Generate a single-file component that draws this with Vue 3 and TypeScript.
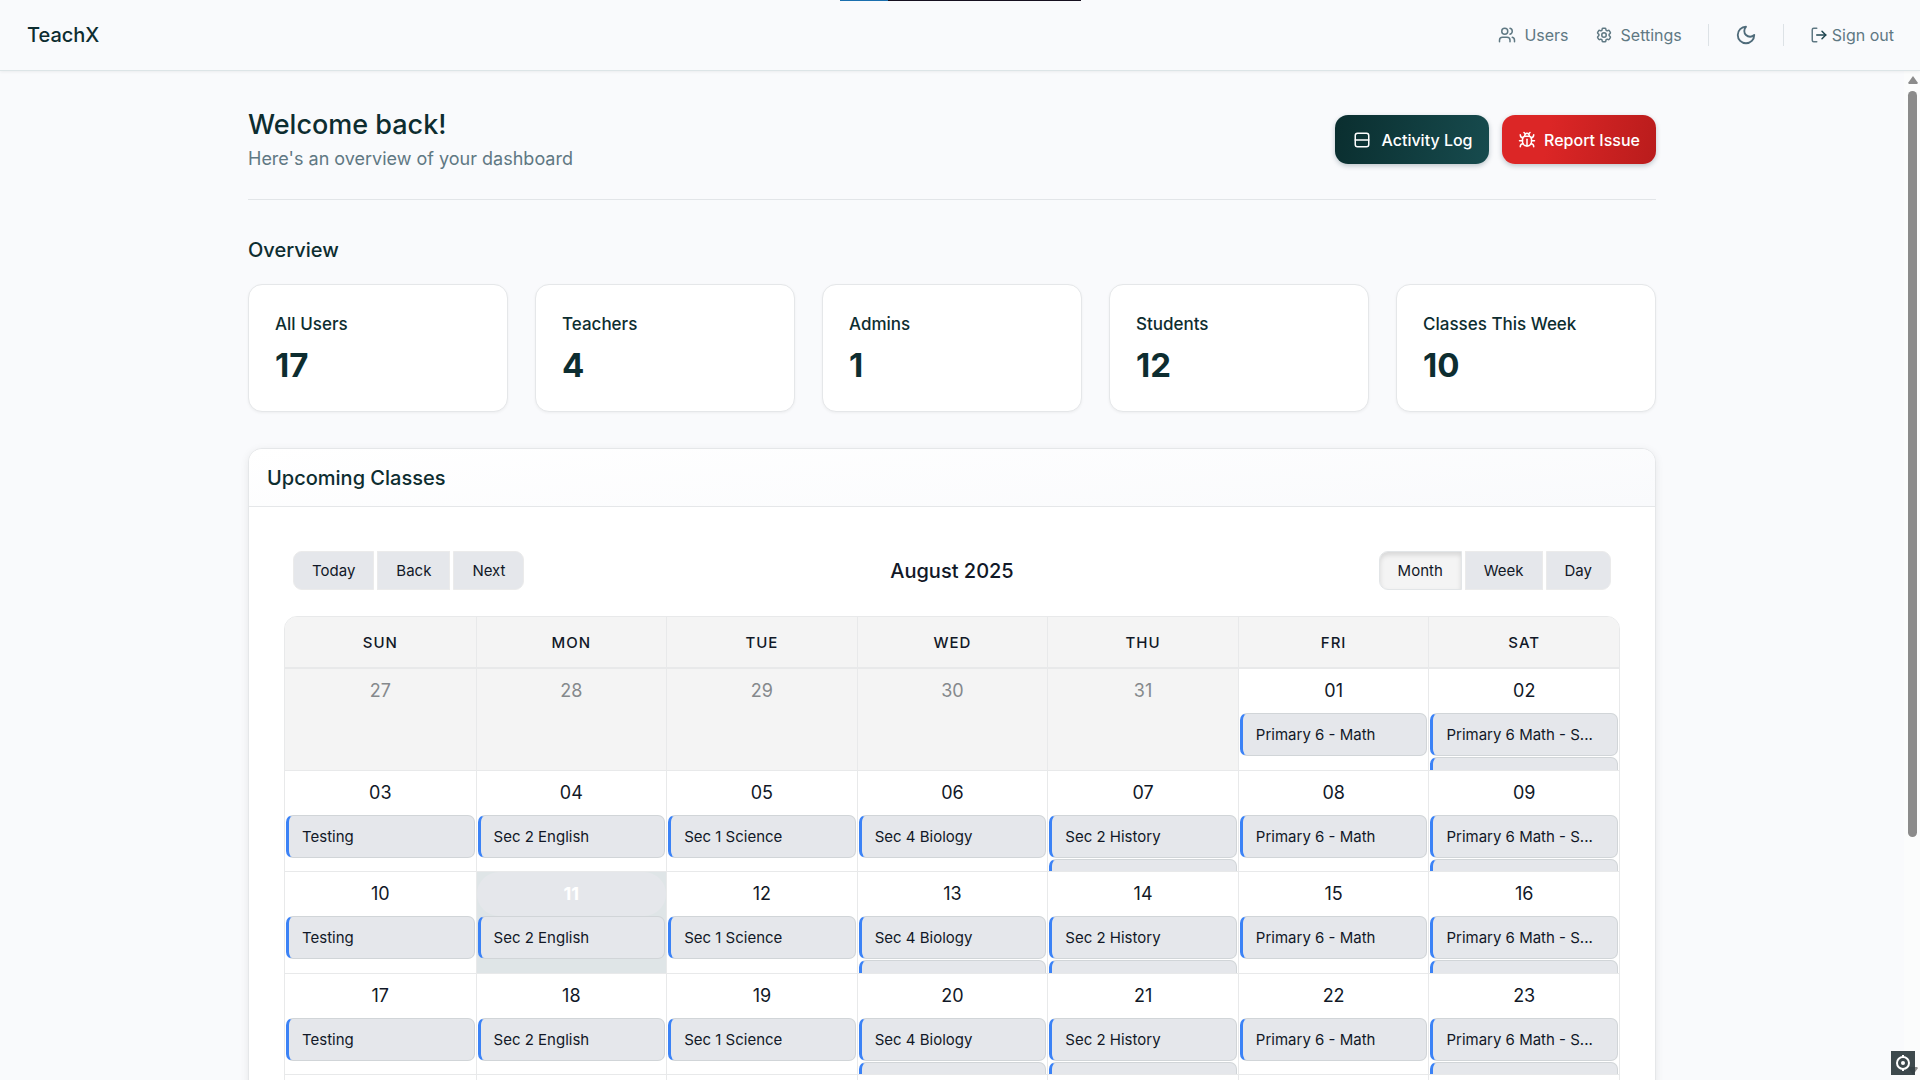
<script setup lang="ts">
interface Stat {
  label: string
  value: number
}

interface Day {
  label: string
  outside: boolean
  today: boolean
  title: string
  more: boolean
}

const stats: Stat[] = [
  { label: 'All Users', value: 17 },
  { label: 'Teachers', value: 4 },
  { label: 'Admins', value: 1 },
  { label: 'Students', value: 12 },
  { label: 'Classes This Week', value: 10 },
]

const weekdays: string[] = ['Sun', 'Mon', 'Tue', 'Wed', 'Thu', 'Fri', 'Sat']

const classes: string[] = [
  'Testing',
  'Sec 2 English',
  'Sec 1 Science',
  'Sec 4 Biology',
  'Sec 2 History',
  'Primary 6 - Math',
  'Primary 6 Math - S...',
]

const daysWithMore: number[] = [2, 7, 9, 13, 14, 16, 20, 21, 23, 27, 28, 30]
const today = 11

// August 2025 begins on a Friday, so the grid opens with five days of July.
const weeks: Day[][] = Array.from({ length: 6 }, (_, w) =>
  weekdays.map((_name, d) => {
    const n = w * 7 + d - 4
    const outside = n < 1 || n > 31
    const shown = n < 1 ? n + 31 : n > 31 ? n - 31 : n
    return {
      label: String(shown).padStart(2, '0'),
      outside,
      today: n === today,
      title: outside ? '' : classes[d],
      more: daysWithMore.includes(n),
    }
  }),
)
</script>

<template>
  <div class="app">
    <div class="loader"><span class="loader-done"></span></div>

    <header class="topbar">
      <a class="brand" href="#">TeachX</a>
      <nav class="nav">
        <a class="nav-link" href="#">
          <svg class="icon" viewBox="0 0 24 24"><path d="M16 21v-2a4 4 0 0 0-4-4H6a4 4 0 0 0-4 4v2" /><circle cx="9" cy="7" r="4" /><path d="M22 21v-2a4 4 0 0 0-3-3.87" /><path d="M16 3.13a4 4 0 0 1 0 7.75" /></svg>
          Users
        </a>
        <a class="nav-link" href="#">
          <svg class="icon" viewBox="0 0 24 24"><path d="M9.594 3.94c.09-.542.56-.94 1.11-.94h2.593c.55 0 1.02.398 1.11.94l.213 1.281c.063.374.313.686.645.87.074.04.147.083.22.127.325.196.72.257 1.075.124l1.217-.456a1.125 1.125 0 0 1 1.37.49l1.296 2.247a1.125 1.125 0 0 1-.26 1.431l-1.003.827c-.293.241-.438.613-.43.992a7.723 7.723 0 0 1 0 .255c-.008.378.137.75.43.991l1.004.827c.424.35.534.955.26 1.43l-1.298 2.247a1.125 1.125 0 0 1-1.369.491l-1.217-.456c-.355-.133-.75-.072-1.076.124a6.47 6.47 0 0 1-.22.128c-.331.183-.581.495-.644.869l-.213 1.281c-.09.543-.56.94-1.11.94h-2.594c-.55 0-1.019-.398-1.11-.94l-.213-1.281c-.062-.374-.312-.686-.644-.87a6.52 6.52 0 0 1-.22-.127c-.325-.196-.72-.257-1.076-.124l-1.217.456a1.125 1.125 0 0 1-1.369-.49l-1.297-2.247a1.125 1.125 0 0 1 .26-1.431l1.004-.827c.292-.24.437-.613.43-.991a6.932 6.932 0 0 1 0-.255c.007-.38-.138-.751-.43-.992l-1.004-.827a1.125 1.125 0 0 1-.26-1.43l1.297-2.247a1.125 1.125 0 0 1 1.37-.491l1.216.456c.356.133.751.072 1.076-.124.072-.044.146-.086.22-.128.332-.183.582-.495.644-.869l.214-1.28Z" /><circle cx="12" cy="12" r="3" /></svg>
          Settings
        </a>
        <span class="divider"></span>
        <button class="theme" type="button" aria-label="Dark mode">
          <svg class="icon moon" viewBox="0 0 24 24"><path d="M12 3a6 6 0 0 0 9 9 9 9 0 1 1-9-9Z" /></svg>
        </button>
        <span class="divider"></span>
        <button class="nav-link signout" type="button">
          <svg class="icon" viewBox="0 0 24 24"><path d="M9 21H5a2 2 0 0 1-2-2V5a2 2 0 0 1 2-2h4" /><path class="dark" d="m16 17 5-5-5-5" /><path class="dark" d="M21 12H9" /></svg>
          Sign out
        </button>
      </nav>
    </header>

    <div class="body">
      <main class="scroller">
        <div class="container">
          <div class="intro">
            <div>
              <h1>Welcome back!</h1>
              <p>Here's an overview of your dashboard</p>
            </div>
            <div class="actions">
              <button class="action log" type="button">
                <svg class="icon rows" viewBox="0 0 24 24"><rect x="3" y="3" width="18" height="18" rx="3" /><path d="M3 12h18" /></svg>
                Activity Log
              </button>
              <button class="action report" type="button">
                <svg class="icon" viewBox="0 0 24 24"><path d="m8 2 1.88 1.88" /><path d="M14.12 3.88 16 2" /><path d="M9 7.13v-1a3.003 3.003 0 1 1 6 0v1" /><path d="M12 20c-3.3 0-6-2.7-6-6v-3a4 4 0 0 1 4-4h4a4 4 0 0 1 4 4v3c0 3.3-2.7 6-6 6" /><path d="M12 20v-9" /><path d="M6.53 9C4.6 8.8 3 7.1 3 5" /><path d="M6 13H2" /><path d="M3 21c0-2.1 1.7-3.9 3.8-4" /><path d="M20.97 5c0 2.1-1.6 3.8-3.5 4" /><path d="M22 13h-4" /><path d="M17.2 17c2.1.1 3.8 1.9 3.8 4" /></svg>
                Report Issue
              </button>
            </div>
          </div>

          <section class="overview">
            <h2>Overview</h2>
            <div class="stats">
              <article v-for="s in stats" :key="s.label" class="stat">
                <h3>{{ s.label }}</h3>
                <p>{{ s.value }}</p>
              </article>
            </div>
          </section>

          <section class="panel">
            <div class="panel-head"><h2>Upcoming Classes</h2></div>
            <div class="panel-body">
              <div class="toolbar">
                <div class="group">
                  <button type="button">Today</button>
                  <button type="button">Back</button>
                  <button type="button">Next</button>
                </div>
                <div class="month">August 2025</div>
                <div class="group views">
                  <button type="button" class="active">Month</button>
                  <button type="button">Week</button>
                  <button type="button">Day</button>
                </div>
              </div>

              <table class="calendar">
                <thead>
                  <tr>
                    <th v-for="d in weekdays" :key="d" scope="col">{{ d }}</th>
                  </tr>
                </thead>
                <tbody>
                  <tr v-for="(week, w) in weeks" :key="w">
                    <td v-for="day in week" :key="day.label" :class="{ outside: day.outside, today: day.today }">
                      <div class="date">{{ day.label }}</div>
                      <div v-if="day.title" class="event">{{ day.title }}</div>
                      <div v-if="day.more" class="event"></div>
                    </td>
                  </tr>
                </tbody>
              </table>
            </div>
          </section>
        </div>
      </main>

      <div class="scrollbar" aria-hidden="true">
        <svg class="arrow" viewBox="0 0 10 8"><path d="M5 0 10 7 9 8H1L0 7Z" /></svg>
        <div class="thumb"></div>
        <svg class="arrow down" viewBox="0 0 10 8"><path d="M5 8 0 1 1 0h8l1 1Z" /></svg>
      </div>
    </div>

    <div class="badge">
      <svg viewBox="0 0 24 24"><circle cx="12" cy="12" r="6" /><circle class="dot" cx="12" cy="12" r="2" /><path d="M12 4v2M12 18v2" /></svg>
    </div>
  </div>
</template>

<style>
body {
  background: #f9fafc;
}
</style>

<style scoped>
* {
  box-sizing: border-box;
}

.app {
  position: relative;
  display: flex;
  flex-direction: column;
  height: 100vh;
  overflow: hidden;
  background: #f9fafc;
  color: #0d2d30;
  font-family: Inter, "Liberation Sans", sans-serif;
  font-size: 18px;
}

h1,
h2,
h3,
p {
  margin: 0;
}

button {
  font-family: inherit;
  cursor: pointer;
}

.icon {
  flex: none;
  width: 18px;
  height: 18px;
  fill: none;
  stroke: currentColor;
  stroke-width: 2;
  stroke-linecap: round;
  stroke-linejoin: round;
}

.loader {
  position: absolute;
  top: 0;
  left: 50%;
  width: 241px;
  height: 1px;
  margin-left: -120px;
  background: #16101f;
}

.loader-done {
  display: block;
  width: 20%;
  height: 1px;
  background: #1a6fae;
}

.topbar {
  position: relative;
  display: flex;
  flex: none;
  align-items: center;
  justify-content: space-between;
  height: 71px;
  padding: 0 26px 0 27px;
  border-bottom: 1px solid #dde5e7;
  box-shadow: 0 1px 3px rgba(0, 0, 0, 0.06);
}

.brand {
  color: #0d2d30;
  font-size: 20px;
  font-weight: 500;
  text-decoration: none;
}

.nav {
  display: flex;
  align-items: center;
  gap: 26px;
}

.nav-link {
  display: flex;
  align-items: center;
  gap: 8px;
  color: #5f7883;
  font-size: 16px;
  line-height: 22px;
  text-decoration: none;
}

.divider {
  width: 1px;
  height: 22px;
  background: #dde2e6;
}

.theme,
.signout {
  padding: 0;
  border: 0;
  background: none;
}

.signout {
  gap: 4px;
}

.theme {
  display: flex;
  color: #4f6b7a;
}

.moon {
  width: 22px;
  height: 22px;
}

.dark {
  stroke: #1f4650;
}

.body {
  display: flex;
  flex: 1;
  min-height: 0;
}

.scroller {
  flex: 1;
  min-width: 0;
  overflow-y: auto;
  scrollbar-width: none;
}

.container {
  max-width: 1408px;
  margin: 0 auto;
  padding: 36px 0;
}

.intro {
  display: flex;
  align-items: center;
  justify-content: space-between;
  padding-bottom: 27px;
  border-bottom: 1px solid #e2e5e8;
}

h1 {
  font-size: 27px;
  font-weight: 500;
  line-height: 36px;
}

.intro p {
  margin-top: 2px;
  color: #5f7883;
  line-height: 27px;
}

.actions {
  display: flex;
  gap: 13px;
}

.action {
  display: flex;
  align-items: center;
  justify-content: center;
  gap: 8px;
  min-width: 154px;
  height: 49px;
  padding: 0 16px;
  border: 0;
  border-radius: 13px;
  box-shadow: 0 2px 5px rgba(15, 45, 60, 0.25);
  color: #fff;
  font-size: 16px;
  font-weight: 500;
  white-space: nowrap;
}

.rows {
  margin: 0 2px;
}

.log {
  background: linear-gradient(100deg, #0a2e2f, #174b4e);
}

.report {
  background: linear-gradient(100deg, #dc2626 30%, #b91c1c);
}

.overview {
  padding-top: 36px;
}

h2 {
  font-size: 20px;
  font-weight: 500;
  line-height: 28px;
}

.stats {
  display: grid;
  grid-template-columns: repeat(5, 1fr);
  gap: 27px;
  margin-top: 20px;
}

.stat {
  padding: 26px;
  border: 1px solid #e5e7e9;
  border-radius: 14px;
  background: #fff;
  box-shadow: 0 1px 3px rgba(0, 0, 0, 0.05);
}

.stat h3 {
  font-size: 17px;
  font-weight: 500;
  line-height: 27px;
}

.stat p {
  margin-top: 7px;
  font-size: 33px;
  font-weight: 700;
  line-height: 40px;
}

.panel {
  margin-top: 36px;
  overflow: hidden;
  border: 1px solid #e5e7e9;
  border-radius: 14px;
  background: #fff;
  box-shadow: 0 2px 8px rgba(0, 0, 0, 0.08);
}

.panel-head {
  padding: 15px 18px 14px;
  border-bottom: 1px solid #e5e7e9;
  background: linear-gradient(175deg, #fff, #f9fafc);
}

.panel-body {
  padding: 35px;
}

.toolbar {
  display: grid;
  grid-template-columns: 1fr auto 1fr;
  align-items: center;
  margin-bottom: 26px;
  padding: 9px 9px 0;
}

.group {
  display: flex;
  gap: 3px;
}

.views {
  justify-content: flex-end;
}

.group button {
  height: 39px;
  padding: 0 18px;
  border: 1px solid #ebebeb;
  background: #e5e7eb;
  color: #111827;
  font-size: 15px;
}

.group button:first-child {
  border-radius: 9px 0 0 9px;
}

.group button:last-child {
  border-radius: 0 9px 9px 0;
}

.group .active {
  background: #f4f4f4;
  border-color: #e2e5e7;
  box-shadow: inset 0 3px 5px rgba(0, 0, 0, 0.12);
}

.month {
  color: #111827;
  font-size: 20px;
  font-weight: 500;
}

.calendar {
  display: block;
  overflow: hidden;
  border: 1px solid #e8e9ea;
  border-radius: 13px;
  color: #111827;
}

thead {
  display: block;
  border-bottom: 2px solid #e8e9ea;
  background: #f4f4f4;
}

tbody {
  display: grid;
  grid-template-rows: repeat(6, minmax(0, 1fr));
  height: 609px;
}

tr {
  display: grid;
  grid-template-columns: repeat(7, minmax(0, 1fr));
}

tbody tr {
  border-bottom: 1px solid #e8e9ea;
}

th {
  height: 50px;
  padding: 1px 0 0;
  font-size: 15px;
  font-weight: 500;
  line-height: 49px;
  letter-spacing: 1px;
  text-align: center;
  text-transform: uppercase;
}

td {
  padding: 0;
  overflow: hidden;
}

th + th,
td + td {
  border-left: 1px solid #e8e9ea;
}

.date {
  height: 44px;
  line-height: 44px;
  text-align: center;
}

.outside {
  background: #f4f4f4;
  color: #85898c;
}

.today {
  background: #dfe5e7;
}

.today .date {
  border-radius: 22px;
  background: #e5e7eb;
  color: #fff;
  font-weight: 700;
}

.event {
  height: 43px;
  margin: 0 1px 1px;
  padding: 0 13px;
  border: 1px solid #d1d5d8;
  border-left: 3px solid #3b82f6;
  border-radius: 7px;
  background: #e5e7eb;
  font-size: 15px;
  line-height: 41px;
  white-space: nowrap;
}

.scrollbar {
  display: flex;
  flex: none;
  flex-direction: column;
  align-items: center;
  width: 16px;
  padding: 5px 0 5px 1px;
  background: #fbfcfc;
}

.arrow {
  width: 10px;
  height: 8px;
  fill: #8b8b8b;
}

.thumb {
  width: 9px;
  height: 746px;
  margin-top: 7px;
  border-radius: 5px;
  background: #8b8b8b;
}

.down {
  margin-top: auto;
}

.badge {
  position: absolute;
  right: 5px;
  bottom: 5px;
  width: 24px;
  height: 24px;
  background: rgba(45, 58, 62, 0.92);
}

.badge svg {
  display: block;
  fill: none;
  stroke: #fff;
  stroke-width: 2;
}

.badge .dot {
  fill: #fff;
  stroke: none;
}
</style>
